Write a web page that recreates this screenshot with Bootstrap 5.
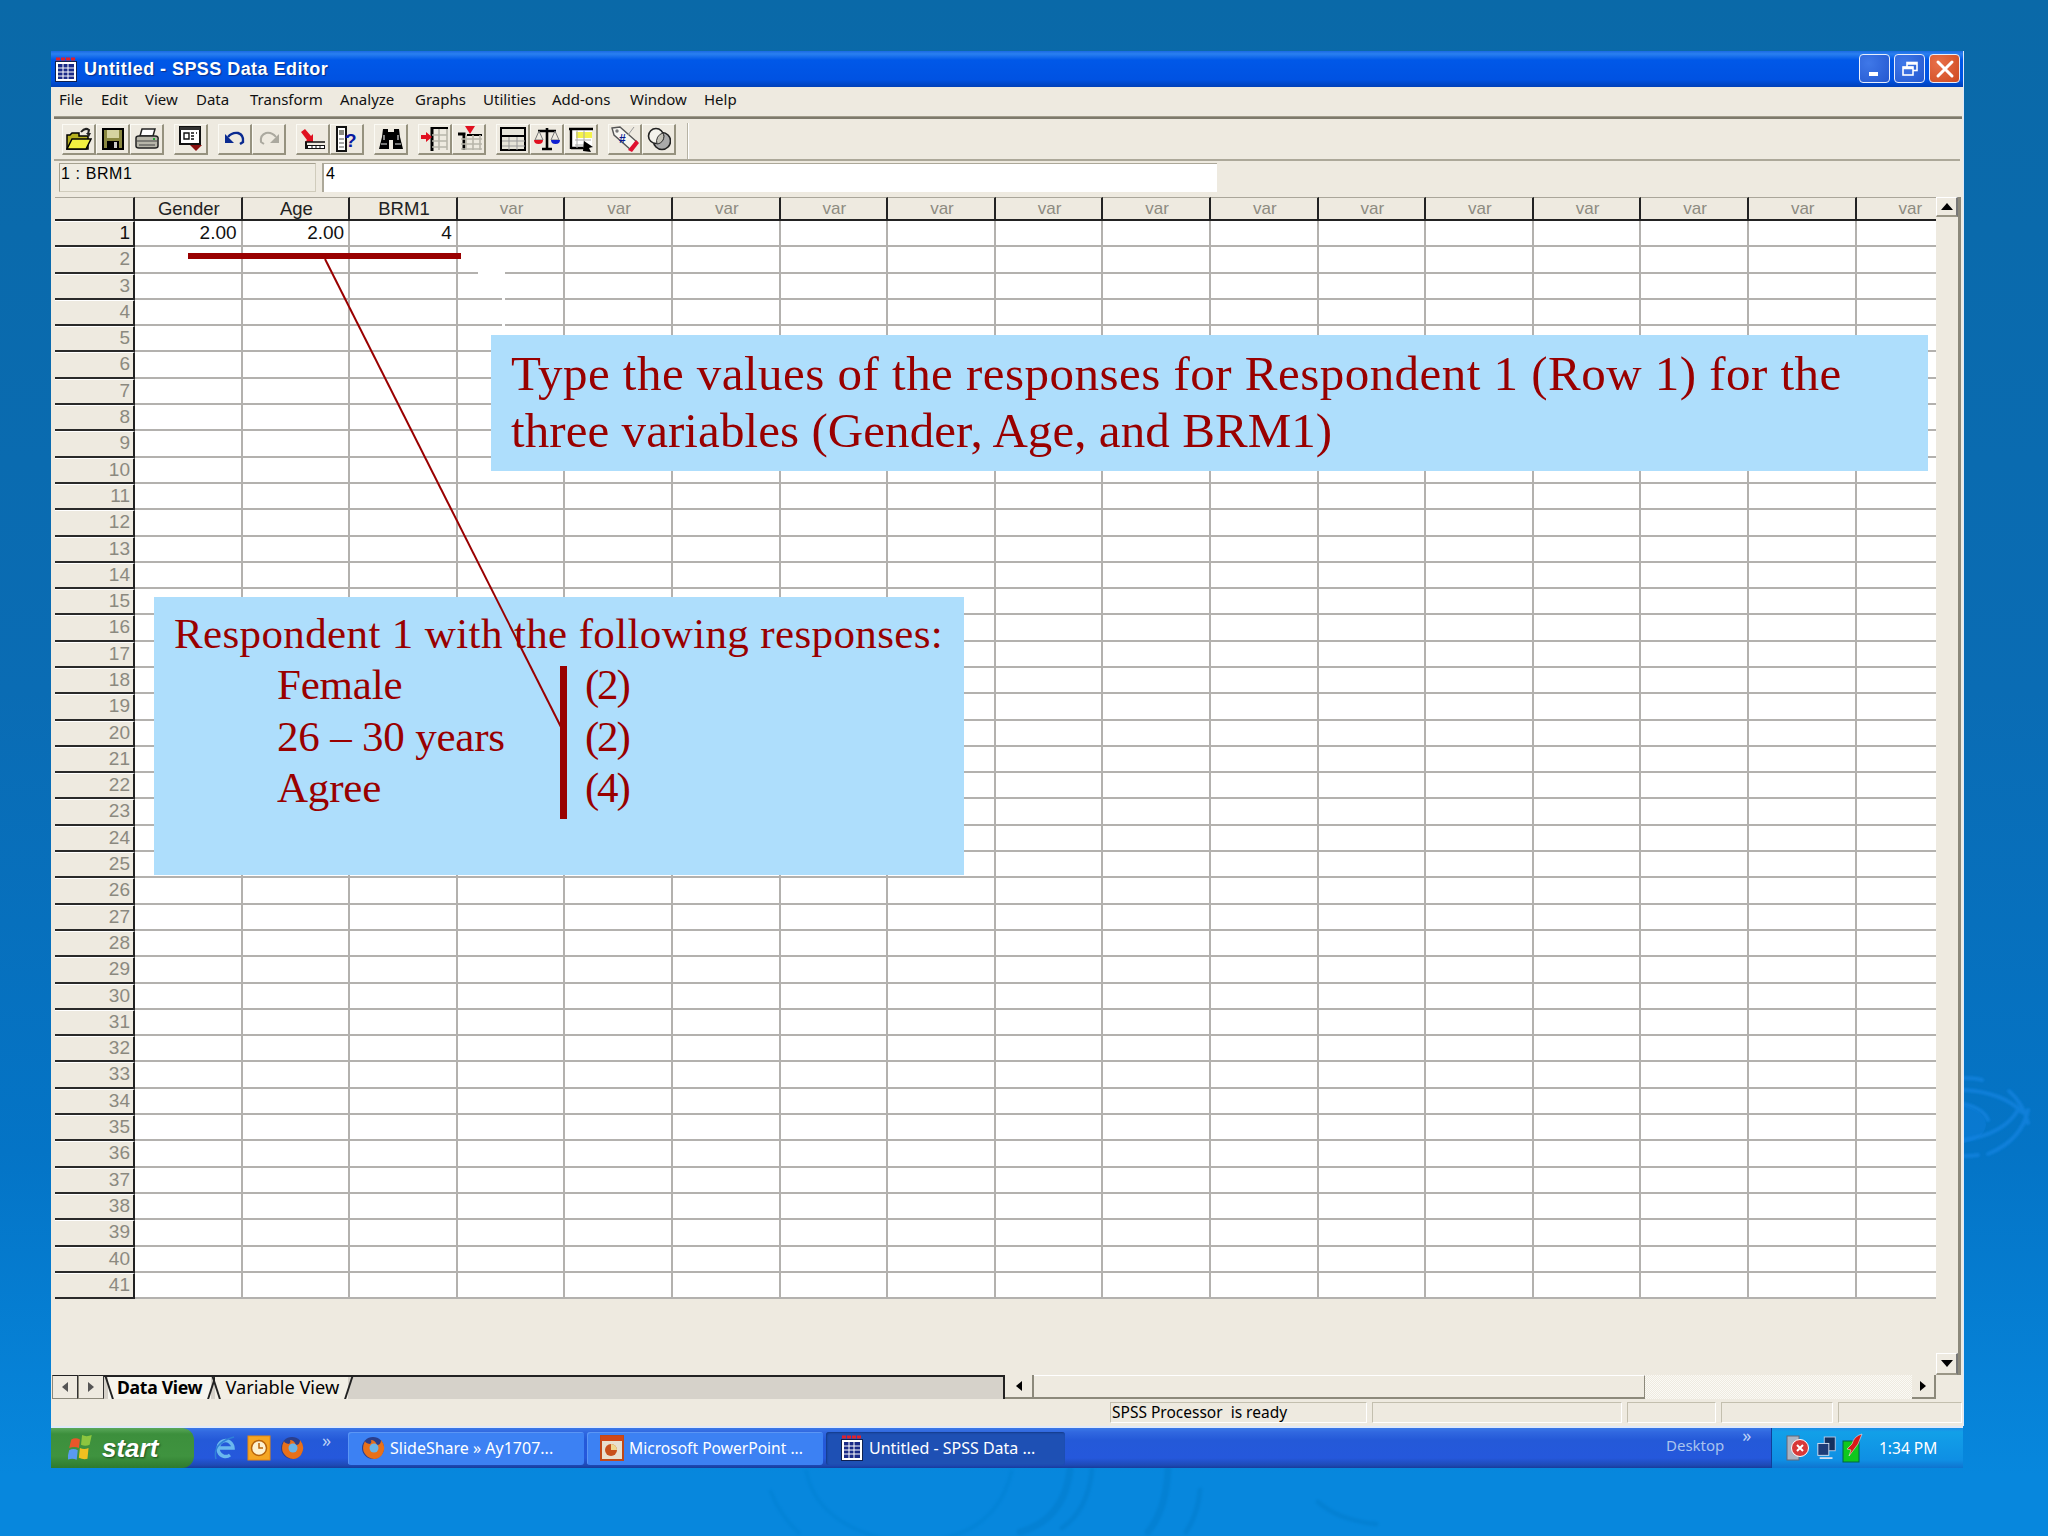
<!DOCTYPE html>
<html lang="en">
<head>
<meta charset="utf-8">
<title>Untitled - SPSS Data Editor</title>
<link href="https://cdn.jsdelivr.net/npm/bootstrap@5.3.0/dist/css/bootstrap.min.css" rel="stylesheet">
<style>
html,body{margin:0;height:100%}
body.desk{width:2048px;height:1536px;overflow:hidden;position:relative;background:linear-gradient(180deg,#0a69a8 0,#0a6cb4 45%,#0474c6 75%,#0787dd 96%,#0787dd 100%);padding:51px 0 0 51px;font-family:"Noto Sans","Liberation Sans",sans-serif}
.ripples{position:absolute;left:0;top:0;pointer-events:none}
.xp-win{position:relative;width:1912px;height:1375px;background:#eeeae0;color:#000;box-shadow:1px 0 0 #dfe9fa}
.xp-title{height:36px;background:linear-gradient(180deg,#1a6ae4 0,#2a80f0 8%,#0058e8 25%,#0052e2 80%,#0040b8 100%);color:#fff;font:700 18px/1 "Liberation Sans",sans-serif;letter-spacing:.45px;text-shadow:1px 1px 1px #0b2f88;padding:0 3px 0 3px}
.xp-tbtn{width:31px;height:29px;border:1.5px solid #e8eefc;border-radius:4px;background:radial-gradient(circle at 30% 30%,#3f78e8,#2458d0);display:flex;align-items:center;justify-content:center}
.xp-tbtn.shut{background:radial-gradient(circle at 30% 30%,#e8704a,#cf4a20)}
.xp-menu{height:29px;display:grid;grid-template-columns:42px 44px 51px 54px 90px 75px 68px 69px 78px 74px 50px;padding-left:8px;font-size:15px;line-height:25px;color:#111}
.xp-rule{height:3px;background:#7e7a6c;margin:0 1px 0 3px;border-top:1px solid #a09c8c}
.xp-tools{height:42px;padding:5px 0 0 8px;border-bottom:2px solid #aca899;position:relative;margin:0 3px}
.xp-tools-end{width:2px;height:36px;background:#b7b3a4;margin-left:1px;margin-top:-1px;border-right:1px solid #fff}
.tool-set{margin-right:10px}
.tool-key{width:34px;height:31px;background:#eeeae0;border-top:1px solid #fbfaf4;border-left:1px solid #fbfaf4;border-right:2px solid #96927f;border-bottom:2px solid #96927f;display:flex;align-items:center;justify-content:center}
.xp-cellbar{height:36px;padding:2px 0 5px 8px;gap:6px}
.cell-name{width:257px;height:29px;border:1px solid #d0ccbc;border-left-color:#a5a190;border-top-color:#a5a190;background:#efece2;font:16px/20px "Liberation Sans",sans-serif;letter-spacing:.6px;padding-left:1px}
.cell-value{width:895px;height:29px;background:#fff;border-left:2px solid #aca899;border-top:1px solid #aca899;font:16px/20px "Liberation Sans",sans-serif;padding-left:2px}
.sheet-zone{height:1179px;padding-left:4px}
.sheet-clip{width:1881px;overflow:hidden;position:relative}
.sheet-grid{display:grid;grid-template-columns:80px repeat(17,107.6px);grid-template-rows:24px repeat(41,26.3px);width:1909.2px;font:19px/1 "Liberation Sans",sans-serif}
.gc{background:#fff;border-right:2px solid #b3b1ae;border-bottom:2px solid #b3b1ae;text-align:right;padding:2px 4px 0 0;color:#111;overflow:hidden;white-space:nowrap}
.gh{background:#eeeae0;border-right:2px solid #222;border-bottom:2px solid #222;border-top:1px solid #aaa69a;text-align:center;padding:2px 0 0 2px;font-size:18.5px;color:#222;line-height:18px}
.gh.gv{color:#8d8b80;font-size:17px}
.gr{background:#eeeae0;border-right:2px solid #222;border-bottom:2px solid #2a2a2a;border-top:1px solid #fff;text-align:right;padding:1px 3px 0 0;color:#8b897f}
.gr.act{color:#111}
.vscroll{width:25px;border-right:3px solid #8c897b;background:#eeeae0}
.vs-key{height:20px;width:22px;background:#eeeae0;border-right:2px solid #777;border-bottom:2px solid #9a9686;border-top:1px solid #fff;border-left:1px solid #fff;display:flex;align-items:center;justify-content:center}
.tri-up{width:0;height:0;border:6px solid transparent;border-bottom:7px solid #000;border-top:0}
.tri-down{width:0;height:0;border:6px solid transparent;border-top:7px solid #000;border-bottom:0}
.vs-bottom{height:22px;margin-top:auto}
.tabline{height:24px;padding-left:1px;font:18.2px/24px "Noto Sans",sans-serif}
.tab-arrow{width:26px;height:24px;background:#eeeae0;border:1px solid #8c897b;border-top-color:#222;border-right-color:#333;display:flex;align-items:center;justify-content:center}
.tri-l{width:0;height:0;border:5px solid transparent;border-right:6px solid #555;border-left:0}
.tri-r{width:0;height:0;border:5px solid transparent;border-left:6px solid #555;border-right:0}
.tri-r.dk{border-left-color:#000}.tri-l.dk{border-right-color:#000}
.sheet-tabs{width:901px;background:#d6d2ca;border-top:2px solid #222;border-right:2px solid #222;height:24px;position:relative;margin-right:0}
.sheet-tab{position:relative;padding:0 9px 0 10px;line-height:21px;background:#f2efe5;height:22px;white-space:nowrap}
.sheet-tab.on{font-weight:700;background:#f6f5ee;font-size:17.6px;letter-spacing:-.3px;padding:0 9px;margin-left:4px}
.sheet-tab::before,.sheet-tab::after{content:"";position:absolute;top:-2px;height:24px;width:2px;background:#222}
.sheet-tab::before{left:0;transform:skewX(18deg)}
.sheet-tab::after{right:-2px;transform:skewX(-18deg)}
.hs-thumb{width:611px;height:24px;background:#eeeae0;border-top:1px solid #fff;border-bottom:2px solid #8c897b;border-right:1px solid #8c897b}
.hs-track{width:267px;height:24px;background:repeating-conic-gradient(#eeeae0 0 25%,#fbfaf5 0 50%) 0 0/2px 2px}
.hs-key{height:24px;width:29px;background:#eeeae0;border-bottom:2px solid #8c897b;border-right:2px solid #8c897b;display:flex;align-items:center;justify-content:center}
.hs-key.tail{width:24px}
.xp-status{height:27px;padding:3px 0 0 1059px;gap:5px;font-size:15.5px;line-height:18px}
.stat-cell{height:21px;border:1px solid #c3bfae;border-right-color:#fff;border-bottom-color:#fff;padding-left:1px;white-space:nowrap}
.stat-w1{width:257px}.stat-w2{width:250px}.stat-w3{width:89px}.stat-w4{width:112px}.stat-w5{width:124px}
.xp-taskbar{width:1912px;height:42px;position:relative;background:linear-gradient(180deg,#3a78e8 0,#3168e0 10%,#2459d8 30%,#2558dc 75%,#1e4bb8 92%,#173c9c 100%);color:#fff;font-size:16px;border-top:2px solid #dfe9fa;line-height:22px}
.start-key{width:143px;height:40px;background:linear-gradient(180deg,#5aa85a 0,#3c8f3c 15%,#3f933f 70%,#2e7a2e 100%);border-radius:0 12px 12px 0;font:italic 700 26px/1 "Liberation Sans",sans-serif;text-shadow:1px 1px 2px #1c4d1c;gap:8px;padding-left:17px}
.quick-zone{width:154px;padding:0 0 0 20px;gap:9px;position:relative}
.chev{color:#bcd0f5;font-size:18px;line-height:1;position:relative;top:-8px;margin-left:9px}
.task-key{width:236px;height:33px;background:#3c81f3;border-radius:3px;margin-right:3px;gap:5px;padding-left:13px;white-space:nowrap;box-shadow:inset 1px 1px 0 #5b96f5}
.task-key.wide-txt{font-size:15.6px}
.task-key.now{background:#1e50b4;box-shadow:inset 1px 1px 2px #143a88;width:239px;padding-left:15px;gap:6px}
.desk-band{position:absolute;left:1615px;top:6px;color:#a9c3ee;gap:18px;font-size:15px}
.tray-zone{position:absolute;right:0;top:0;bottom:0;width:192px;background:linear-gradient(180deg,#1b8fe6 0,#12a0e8 10%,#0f8fe4 80%,#0f74cf 100%);border-left:1px solid #103f9a;padding-left:14px;font-size:15.5px}
.tray-time{margin-left:15px}
.note-a,.note-b{position:absolute;background:#aedefc;color:#990000;font-family:"Liberation Serif",serif}
.note-a{left:491px;top:335px;width:1437px;height:136px;font-size:49px;line-height:57px;padding:10px 0 0 20px;white-space:nowrap}
.note-l1{letter-spacing:.47px}.note-l2{letter-spacing:.07px}
.note-b{left:154px;top:597px;width:810px;height:278px;font-size:43px;line-height:51.3px;padding:11px 0 0 20px;white-space:nowrap}
.note-head{letter-spacing:.37px}
.note-row{padding-left:103px;display:flex}
.note-label{width:308px;letter-spacing:-.2px}
.note-val{letter-spacing:-2.2px}
.note-marks{position:absolute;left:0;top:0;pointer-events:none}
</style>
</head>
<body class="desk">
<svg class="ripples" width="2048" height="1536" aria-hidden="true" fill="none">
  <defs><filter id="soft"><feGaussianBlur stdDeviation="1.2"/></filter></defs>
  <g stroke="#1a8cee" stroke-width="4" opacity=".5" stroke-linecap="round" filter="url(#soft)">
    <path d="M1964 1078q12 0 18 2"/><path d="M1964 1090q38 2 58 22"/><path d="M2009 1091q14 12 19 32"/>
    <path d="M1964 1104q20 5 24 16"/><path d="M1964 1140q40-6 54-30"/><path d="M1988 1154q34-14 40-44"/><path d="M1964 1156q8 0 14-1"/>
  </g>
  <path d="M1964 1105q22 8 22 20-2 14-22 18z" fill="#1585e4" opacity=".35"/>
  <g stroke="#0477c4" stroke-width="5" opacity=".35" stroke-linecap="round" filter="url(#soft)">
    <path d="M1070 1470q-6 50-50 62" stroke-width="7"/><path d="M1092 1470q-4 40-30 58"/>
    <path d="M1168 1470q-2 40-20 62" stroke-width="7"/><path d="M1200 1490q-2 24-14 42"/>
    <path d="M1318 1502q20 18 58 22"/>
  </g>
  <g stroke="#0680d2" stroke-width="4" opacity=".45" filter="url(#soft)">
    <path d="M1012 1470q-16 70-100 72"/><path d="M806 1470q10 56 92 72"/>
    <path d="M770 1490q10 26 30 44"/>
  </g>
</svg>

<div class="xp-win d-flex flex-column">
  <div class="xp-title d-flex align-items-center">
    <svg width="26" height="30" viewBox="0 0 26 30" class="me-1" aria-hidden="true">
      <path d="M2 5h20" stroke="#e0202a" stroke-width="3" stroke-dasharray="4 1"/>
      <rect x="1.5" y="7.5" width="21" height="20" fill="#fff" stroke="#10204e"/>
      <rect x="4" y="10" width="16" height="15" fill="#1a2a88"/>
      <path d="M4 14h16M4 18h16M4 22h16M9 10v15M14 10v15" stroke="#fff"/>
    </svg>
    <span class="flex-grow-1">Untitled - SPSS Data Editor</span>
    <div class="d-flex gap-1 me-0">
      <div class="xp-tbtn"><svg width="16" height="16" viewBox="0 0 16 16"><rect x="2" y="11" width="9" height="4" fill="#fff"/></svg></div>
      <div class="xp-tbtn"><svg width="18" height="18" viewBox="0 0 18 18" fill="none" stroke="#fff" stroke-width="1.6"><rect x="6" y="2.5" width="10" height="8"/><rect x="2" y="7" width="10" height="8" fill="#3a6fe0"/><path d="M2 8h10M6 3.5h10" stroke-width="2.4"/></svg></div>
      <div class="xp-tbtn shut"><svg width="20" height="20" viewBox="0 0 20 20"><path d="M3 3l14 14M17 3L3 17" stroke="#fff" stroke-width="3" stroke-linecap="round"/></svg></div>
    </div>
  </div>
  <div class="xp-menu"><span>File</span><span>Edit</span><span>View</span><span>Data</span><span>Transform</span><span>Analyze</span><span>Graphs</span><span>Utilities</span><span>Add-ons</span><span>Window</span><span>Help</span></div>
  <div class="xp-rule"></div>
  <div class="xp-tools d-flex">
    <div class="tool-set d-flex">
      <div class="tool-key"><svg width="26" height="24" viewBox="0 0 26 24"><path d="M1 22V8h3l2-2h7v3h9v13z" fill="#b5b020" stroke="#000" stroke-width="1.5"/><path d="M1 22l5-10h19l-5 10z" fill="#f2f040" stroke="#000" stroke-width="1.5"/><path d="M15 5q4-5 8-2l-1 4" fill="none" stroke="#222" stroke-width="2"/><path d="M20 6h5l-2 4z" fill="#222"/></svg></div>
      <div class="tool-key"><svg width="22" height="22" viewBox="0 0 22 22"><rect x="1" y="1" width="20" height="20" fill="#8a8840" stroke="#000" stroke-width="2"/><rect x="5" y="2" width="12" height="8" fill="#d6d4a0"/><rect x="5" y="13" width="12" height="8" fill="#000"/><rect x="12" y="14" width="3" height="6" fill="#ccc"/></svg></div>
      <div class="tool-key"><svg width="26" height="22" viewBox="0 0 26 22"><path d="M8 1h13l-2 7H6z" fill="#fff" stroke="#222" stroke-width="1.5"/><path d="M2 10q0-2 3-2h16q4 0 3 4v6q0 2-3 2H5q-3 0-3-2z" fill="#b8b6aa" stroke="#222" stroke-width="1.5"/><path d="M3 13h20M5 17h16" stroke="#444"/><rect x="19" y="10" width="2" height="2" fill="#2a3"/></svg></div>
    </div>
    <div class="tool-set d-flex">
      <div class="tool-key"><svg width="26" height="26" viewBox="0 0 26 26"><rect x="2" y="1" width="20" height="17" fill="#fff" stroke="#111" stroke-width="2"/><rect x="2" y="1" width="20" height="3" fill="#333"/><path d="M6 7h5v6H6zM13 7h3M13 10h3M13 13h3M18 7h1" fill="none" stroke="#111" stroke-width="1.4"/><path d="M12 19h12l-6 6z" fill="#8a1010"/></svg></div>
    </div>
    <div class="tool-set d-flex">
      <div class="tool-key"><svg width="22" height="18" viewBox="0 0 22 18" fill="none"><path d="M4 7q4-5 10-4 6 2 5 9l-3 2" stroke="#0a2a90" stroke-width="2.4"/><path d="M1 4v9h9z" fill="#0a2a90"/></svg></div>
      <div class="tool-key"><svg width="22" height="18" viewBox="0 0 22 18" fill="none"><path d="M18 7q-4-5-10-4-6 2-5 9l3 2" stroke="#aba99f" stroke-width="2"/><path d="M21 4v9h-9z" fill="#aba99f"/></svg></div>
    </div>
    <div class="tool-set d-flex">
      <div class="tool-key"><svg width="26" height="22" viewBox="0 0 26 22"><path d="M1 4l4-3 6 7 2-2v8H5l2-2z" fill="#e01020"/><path d="M5 14h2v3H25v4H5z" fill="#111"/><path d="M5 14h20" stroke="#111" stroke-width="1.5"/><rect x="8" y="18" width="16" height="2" fill="#fff"/><path d="M12 18v2M16 18v2M20 18v2" stroke="#111"/></svg></div>
      <div class="tool-key"><svg width="24" height="26" viewBox="0 0 24 26"><rect x="2" y="1" width="9" height="24" fill="#fff" stroke="#111" stroke-width="2"/><rect x="4" y="4" width="5" height="5" fill="#8a8a80"/><path d="M4 13h5M4 17h5M4 21h5" stroke="#555"/><text x="10" y="21" font-family="Liberation Sans,sans-serif" font-weight="700" font-size="19" fill="#0a1aa0">?</text></svg></div>
    </div>
    <div class="tool-set d-flex">
      <div class="tool-key"><svg width="26" height="24" viewBox="0 0 26 24"><path d="M5 2h5v3h6V2h5l1 8 3 12H15v-9h-4v9H1l3-12z" fill="#000"/><path d="M6 8v5M20 8v5" stroke="#ddd" stroke-width="1.200"/><rect x="3" y="16" width="6" height="2" fill="#777"/><rect x="17" y="16" width="6" height="2" fill="#777"/></svg></div>
    </div>
    <div class="tool-set d-flex">
      <div class="tool-key"><svg width="28" height="26" viewBox="0 0 28 26"><path d="M11 1v24" stroke="#000" stroke-width="3"/><path d="M11 2h15M11 9h15M11 15h15M11 21h15M18 2v22M26 2v22" stroke="#b8b6aa" stroke-width="1.6"/><path d="M11 2h16" stroke="#000" stroke-width="2"/><path d="M0 9h5V6l6 5-6 5v-3H0z" fill="#e01020"/></svg></div>
      <div class="tool-key"><svg width="28" height="26" viewBox="0 0 28 26"><path d="M3 8h6v16" fill="none" stroke="#000" stroke-width="3"/><path d="M12 9h15" stroke="#000" stroke-width="2"/><path d="M6 13h21M6 18h21M6 23h21M11 9v15M18 9v15M25 9v15" stroke="#b8b6aa" stroke-width="1.6"/><path d="M10 0h10l-5 8z" fill="#e01020"/></svg></div>
    </div>
    <div class="tool-set d-flex">
      <div class="tool-key"><svg width="26" height="24" viewBox="0 0 26 24"><rect x="1" y="1" width="24" height="22" fill="#e6e4d8" stroke="#000" stroke-width="2"/><rect x="1" y="8" width="24" height="2" fill="#000"/><path d="M2 14h23M2 19h23M9 10v13M17 10v13" stroke="#999"/></svg></div>
      <div class="tool-key"><svg width="28" height="24" viewBox="0 0 28 24"><path d="M14 1v20M5 4h18M9 22h10" stroke="#000" stroke-width="2.6"/><path d="M6 4L2 13h8zM22 4l-4 9h8z" fill="none" stroke="#777"/><path d="M1 13h9q0 4-4.500 4T1 13z" fill="#e01020"/><path d="M18 13h9q0 4-4.500 4T18 13z" fill="#1020d0"/></svg></div>
      <div class="tool-key"><svg width="26" height="26" viewBox="0 0 26 26"><path d="M2 2h22v20H2z" fill="#fff"/><rect x="8" y="6" width="16" height="6" fill="#f4f24a"/><path d="M1 3h24M3 2v21M3 22h16" stroke="#000" stroke-width="2.400" fill="none"/><path d="M7 14h16M7 19h10M9 4v18M16 4v18" stroke="#aaa"/><path d="M16 15l9 6-4 1 2 4-8-1z" fill="#000"/></svg></div>
    </div>
    <div class="tool-set d-flex">
      <div class="tool-key"><svg width="28" height="26" viewBox="0 0 28 26"><path d="M1 2l8-1 17 15-6 8L3 9z" fill="#f7f6f0" stroke="#555" stroke-width="1.4"/><path d="M17 24l8-10 3 3-7 9z" fill="#e01030"/><circle cx="6" cy="5" r="1.700" fill="#777"/><path d="M23 1l-6 8" stroke="#999"/><text x="8" y="17" font-family="Liberation Sans,sans-serif" font-weight="700" font-size="12" fill="#0a1a90">#</text></svg></div>
      <div class="tool-key"><svg width="24" height="24" viewBox="0 0 24 24"><circle cx="15" cy="14" r="8.500" fill="#aaa" stroke="#222" stroke-width="1.600"/><circle cx="9" cy="9" r="7.500" fill="#f4f3ec" stroke="#222" stroke-width="1.600"/><path d="M10 17a7.500 7.500 0 0 0 6-11 8.500 8.500 0 0 0-6 11z" fill="#c4c2b8" stroke="#333"/></svg></div>
    </div>
    <div class="xp-tools-end"></div>
  </div>
  <div class="xp-cellbar d-flex">
    <div class="cell-name">1 : BRM1</div>
    <div class="cell-value">4</div>
  </div>
  <div class="sheet-zone d-flex">
    <div class="sheet-clip"><div class="sheet-grid" id="sheetGrid"></div></div>
    <div class="vscroll d-flex flex-column">
      <div class="vs-key"><span class="tri-up"></span></div>
      <div class="vs-key vs-bottom"><span class="tri-down"></span></div>
    </div>
  </div>
  <div class="tabline d-flex">
    <div class="tab-arrow"><span class="tri-l"></span></div>
    <div class="tab-arrow"><span class="tri-r"></span></div>
    <div class="sheet-tabs d-flex">
      <div class="sheet-tab on">Data View</div>
      <div class="sheet-tab ms-1">Variable View</div>
    </div>
    <div class="hs-key"><span class="tri-l dk"></span></div>
    <div class="hs-thumb"></div>
    <div class="hs-track"></div>
    <div class="hs-key tail"><span class="tri-r dk"></span></div>
  </div>
  <div class="xp-status d-flex">
    <div class="stat-cell stat-w1">SPSS Processor&nbsp; is ready</div>
    <div class="stat-cell stat-w2"></div>
    <div class="stat-cell stat-w3"></div>
    <div class="stat-cell stat-w4"></div>
    <div class="stat-cell stat-w5"></div>
  </div>
</div>

<div class="xp-taskbar d-flex align-items-center">
  <div class="start-key d-flex align-items-center">
    <svg width="26" height="28" viewBox="0 0 24 26" aria-hidden="true"><path d="M3 5q4-2 8 0l-1 8q-4-2-9 0z" fill="#e8562a"/><path d="M13 1q4 2 9 0l-2 9q-4 2-8 0z" fill="#8cc63f" /><path d="M1 15q4-2 8 0l-1 9q-4-2-9 0z" fill="#5a9af0"/><path d="M11 13q4 2 8 0l-1 10q-4 1-8-1z" fill="#f0c020"/></svg>
    <span>start</span>
  </div>
  <div class="quick-zone d-flex align-items-center">
    <svg width="24" height="26" viewBox="0 0 24 26" aria-hidden="true"><path d="M4 13h15a7.500 8 0 1 0-3 7" fill="none" stroke="#6ab8ee" stroke-width="3.500"/><path d="M2 24Q-2 8 20 2" fill="none" stroke="#2f80d8" stroke-width="1.500"/></svg>
    <svg width="24" height="26" viewBox="0 0 24 26" aria-hidden="true"><rect x="1" y="1" width="22" height="24" fill="#f5a623" stroke="#e8870e"/><circle cx="12" cy="13" r="7.500" fill="#fdf1d0" stroke="#b8640a" stroke-width="1.500"/><path d="M12 8v5h4" fill="none" stroke="#b8640a" stroke-width="1.500"/></svg>
    <svg width="24" height="26" viewBox="0 0 24 26" aria-hidden="true"><circle cx="12" cy="13" r="11" fill="#2a3e8c"/><path d="M4 6q-5 10 3 16 8 5 14-2 5-8-1-15 0 5-4 5-2-5-6-5 1 3-1 4-5-1-5-3z" fill="#e8701a"/><circle cx="13" cy="13" r="4.500" fill="#6ab4e8"/></svg>
    <span class="chev">»</span>
  </div>
  <div class="task-key d-flex align-items-center"><svg width="24" height="26" viewBox="0 0 24 26" aria-hidden="true"><circle cx="12" cy="13" r="11" fill="#2a3e8c"/><path d="M4 6q-5 10 3 16 8 5 14-2 5-8-1-15 0 5-4 5-2-5-6-5 1 3-1 4-5-1-5-3z" fill="#e8701a"/><circle cx="13" cy="13" r="4.500" fill="#6ab4e8"/></svg><span>SlideShare » Ay1707...</span></div>
  <div class="task-key wide-txt d-flex align-items-center"><svg width="24" height="26" viewBox="0 0 24 26" aria-hidden="true"><rect x="1" y="1" width="22" height="24" fill="#e8e0d0" stroke="#c04818" stroke-width="2"/><rect x="1" y="1" width="22" height="5" fill="#d04818"/><circle cx="11" cy="15" r="6" fill="#c8501c"/><path d="M11 15V9a6 6 0 0 1 6 6z" fill="#f0d890"/></svg><span>Microsoft PowerPoint ...</span></div>
  <div class="task-key now d-flex align-items-center"><svg width="22" height="28" viewBox="0 0 22 28" aria-hidden="true"><path d="M1 3h20" stroke="#e0202a" stroke-width="3" stroke-dasharray="4 1"/><rect x=".5" y="5.500" width="21" height="21" fill="#fff" stroke="#10204e"/><rect x="3" y="8" width="16" height="16" fill="#1a2a88"/><path d="M3 12h16M3 16h16M3 20h16M8 8v16M13 8v16" stroke="#fff"/></svg><span>Untitled - SPSS Data ...</span></div>
  <div class="desk-band d-flex"><span>Desktop</span><span class="chev ms-0">»</span></div>
  <div class="tray-zone d-flex align-items-center">
    <svg width="26" height="28" viewBox="0 0 26 28" class="me-1" aria-hidden="true"><rect x="1" y="2" width="12" height="24" fill="#a8b4c4" stroke="#667"/><circle cx="14" cy="14" r="8.500" fill="#d83838" stroke="#fff"/><path d="M11 11l6 6M17 11l-6 6" stroke="#fff" stroke-width="2"/></svg>
    <svg width="22" height="28" viewBox="0 0 24 28" class="me-1" aria-hidden="true"><rect x="9" y="2" width="12" height="15" fill="#14305c" stroke="#b8c8e8"/><rect x="2" y="9" width="12" height="13" fill="#1f3c78" stroke="#d8e4f4"/><path d="M4 25h14" stroke="#d0dcf0" stroke-width="2"/></svg>
    <svg width="22" height="30" viewBox="0 0 22 30" aria-hidden="true"><rect x="1" y="8" width="16" height="21" fill="#10c81e" stroke="#064"/><path d="M20 1q-8 2-10 10l-5 5 4 1-2 6 9-12z" fill="#d81818" stroke="#fff" stroke-width=".5"/></svg>
    <span class="tray-time">1:34 PM</span>
  </div>
</div>

<div class="note-a"><div class="note-l1">Type the values of the responses for Respondent 1 (Row 1) for the</div><div class="note-l2">three variables (Gender, Age, and BRM1)</div></div>
<div class="note-b">
  <div class="note-head">Respondent 1 with the following responses:</div>
  <div class="note-row"><span class="note-label">Female</span><span class="note-val">(2)</span></div>
  <div class="note-row"><span class="note-label">26 – 30 years</span><span class="note-val">(2)</span></div>
  <div class="note-row"><span class="note-label">Agree</span><span class="note-val">(4)</span></div>
</div>
<svg class="note-marks" width="2048" height="1536" aria-hidden="true">
  <path d="M478 270h27v4h-27zM502 296h3v36h-3z" fill="#fff"/>
  <rect x="188" y="253" width="273" height="6" fill="#990000"/>
  <path d="M325 259L562 729" stroke="#990000" stroke-width="2" fill="none"/>
  <rect x="560" y="666" width="7" height="153" fill="#990000"/>
</svg>

<script>
(function(){
  var g=document.getElementById('sheetGrid'),h='<div class="gh"></div>';
  ['Gender','Age','BRM1'].forEach(function(n){h+='<div class="gh">'+n+'</div>';});
  for(var v=0;v<14;v++)h+='<div class="gh gv">var</div>';
  for(var r=1;r<=41;r++){
    h+='<div class="gr'+(r===1?' act':'')+'">'+r+'</div>';
    for(var c=0;c<17;c++){
      var t='';
      if(r===1){t=c<2?'2.00':(c===2?'4':'');}
      h+='<div class="gc">'+t+'</div>';
    }
  }
  g.innerHTML=h;
})();
</script>
<script src="https://cdn.jsdelivr.net/npm/bootstrap@5.3.0/dist/js/bootstrap.bundle.min.js"></script>
</body>
</html>
